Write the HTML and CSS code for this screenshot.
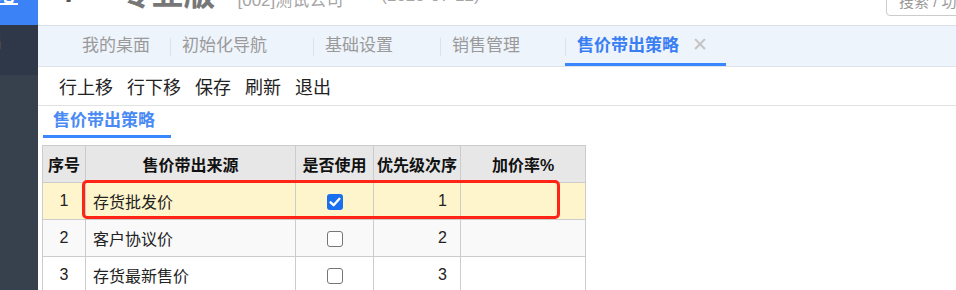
FILE: index.html
```html
<!DOCTYPE html>
<html lang="zh-CN">
<head>
  <meta charset="UTF-8">
  <title>售价带出策略</title>
  <link rel="stylesheet" href="styles.css">
</head>
<body>

  <div class="sidebar">
    <div class="side-top"><span class="side-logo">中心</span></div>
    <div class="side-menu"><span class="side-item">基础</span></div>
  </div>

  <div class="main">
    <div class="header">
      <span class="logo-mark">/</span>
      <span class="logo-text">专业版</span>
      <span class="company">[002]测试公司</span>
      <span class="date">(2023-07-12)</span>
      <span class="search">搜索 / 功能</span>
    </div>

    <div class="tabs">
      <div class="tab">我的桌面</div>
      <div class="tab">初始化导航</div>
      <div class="tab">基础设置</div>
      <div class="tab">销售管理</div>
      <div class="tab active">售价带出策略 <span class="close">✕</span></div>
    </div>

    <div class="toolbar">
      <span>行上移</span>
      <span>行下移</span>
      <span>保存</span>
      <span>刷新</span>
      <span>退出</span>
    </div>

    <div class="content">
      <div class="section-title">售价带出策略</div>

      <div class="grid-wrap">
        <table class="grid">
          <thead>
            <tr>
              <th class="c-no">序号</th>
              <th class="c-src">售价带出来源</th>
              <th class="c-use">是否使用</th>
              <th class="c-pri">优先级次序</th>
              <th class="c-rate">加价率%</th>
            </tr>
          </thead>
          <tbody>
            <tr class="row-sel">
              <td class="c-no">1</td>
              <td class="c-src">存货批发价</td>
              <td class="c-use"><span class="chk on"><svg width="16" height="16" viewBox="0 0 16 16"><path d="M3.6 8.3 L6.6 11.2 L12.4 4.8" fill="none" stroke="#fff" stroke-width="2.4" stroke-linecap="round" stroke-linejoin="round"/></svg></span></td>
              <td class="c-pri">1</td>
              <td class="c-rate"></td>
            </tr>
            <tr class="row-alt">
              <td class="c-no">2</td>
              <td class="c-src">客户协议价</td>
              <td class="c-use"><span class="chk"></span></td>
              <td class="c-pri">2</td>
              <td class="c-rate"></td>
            </tr>
            <tr>
              <td class="c-no">3</td>
              <td class="c-src">存货最新售价</td>
              <td class="c-use"><span class="chk"></span></td>
              <td class="c-pri">3</td>
              <td class="c-rate"></td>
            </tr>
          </tbody>
        </table>
        <div class="mark"></div>
      </div>
    </div>
  </div>

</body>
</html>
```

FILE: styles.css
```css
body {
  margin: 0;
  display: flex;
  height: 290px;
  overflow: hidden;
  font-family: "Liberation Sans", "Noto Sans CJK SC", sans-serif;
  color: #333;
  background: white;
}

/* 左侧菜单 */
.sidebar {
  width: 38px;
  flex-shrink: 0;
  background: #37414d;
  overflow: hidden;
}

.side-top {
  height: 25px;
  background: #3b82f6;
  overflow: hidden;
}

.side-logo {
  display: block;
  margin: -21px 0 0 -22px;
  color: white;
  font-size: 20px;
  font-weight: bold;
  text-decoration: underline;
}

.side-menu {
  height: 50px;
  background: #2e3848;
  overflow: hidden;
}

.side-item {
  display: block;
  margin: 2px 0 0 -33px;
  color: #8a8f97;
  font-size: 17px;
  font-weight: bold;
}

.main {
  flex: 1;
  min-width: 0;
}

/* 顶部 */
.header {
  height: 25px;
  border-bottom: 1px solid #dcdfe6;
  display: flex;
  align-items: flex-start;
  overflow: hidden;
}

.logo-mark {
  margin: -30px 0 0 28px;
  font-size: 34px;
  font-weight: bold;
  color: #555;
}

.logo-text {
  margin: -32px 0 0 44px;
  font-size: 32px;
  font-weight: bold;
  color: #777;
}

.company {
  margin: -14px 0 0 22px;
  font-size: 17px;
  color: #a5a5a5;
}

.date {
  margin: -14px 0 0 38px;
  font-size: 17px;
  color: #a5a5a5;
}

.search {
  margin: -12px -14px 0 auto;
  width: 70px;
  height: 26px;
  padding-left: 12px;
  border: 1px solid #ccc;
  border-radius: 4px;
  font-size: 15px;
  line-height: 26px;
  color: #999;
  white-space: nowrap;
  overflow: hidden;
}

/* 标签页 */
.tabs {
  height: 40px;
  background: #eef4fc;
  border-bottom: 1px solid #dfe3ea;
  display: flex;
  padding-left: 32px;
}

.tab {
  position: relative;
  box-sizing: border-box;
  padding-left: 12px;
  font-size: 17px;
  line-height: 40px;
  color: #9a9a9a;
  white-space: nowrap;
}

.tab:nth-child(1) { width: 100px; }
.tab:nth-child(2) { width: 143px; }
.tab:nth-child(3) { width: 127px; }
.tab:nth-child(4) { width: 125px; }
.tab:nth-child(5) { width: 161px; }

.tab + .tab::before {
  content: "";
  position: absolute;
  left: 0;
  top: 12px;
  height: 18px;
  border-left: 1px solid #dde2ea;
}

.tab.active {
  color: #3a7ef3;
  font-weight: bold;
  border-bottom: 3px solid #3a86ff;
  line-height: 38px;
}

.close {
  margin-left: 8px;
  font-weight: normal;
  font-size: 19px;
  color: #c4c4c4;
}

/* 工具栏 */
.toolbar {
  height: 38px;
  border-bottom: 1px solid #e2e2e2;
  display: flex;
  align-items: center;
  gap: 14px;
  padding-left: 21px;
  font-size: 18px;
  color: #222;
}

/* 内容 */
.content {
  padding-left: 4px;
}

.section-title {
  width: 128px;
  margin-left: 1px;
  box-sizing: border-box;
  padding-left: 10px;
  height: 32px;
  line-height: 29px;
  border-bottom: 3px solid #3a86ff;
  font-size: 17px;
  font-weight: bold;
  color: #4a8af4;
}

.grid-wrap {
  position: relative;
  margin-top: 7px;
}

.grid {
  border-collapse: collapse;
  table-layout: fixed;
  font-size: 16px;
}

.grid th,
.grid td {
  border: 1px solid #cccccc;
  height: 36px;
  padding: 0;
}

.grid th {
  background: #e7e7e7;
  font-weight: bold;
  color: #111;
}

.grid td {
  color: #222;
}

.c-no { width: 42px; text-align: center; }
.c-src { width: 209px; }
.c-use { width: 77px; text-align: center; }
.c-pri { width: 86px; }
.c-rate { width: 124px; }

td.c-src { width: 202px; padding-left: 7px; }
td.c-pri { width: 73px; text-align: right; padding-right: 13px; }

.row-sel td { background: #fff5cc; }
.row-alt td { background: #f9f9f9; }

.chk {
  display: inline-block;
  box-sizing: border-box;
  width: 16px;
  height: 16px;
  border: 1.5px solid #767676;
  border-radius: 3px;
  vertical-align: middle;
  background: white;
}

.chk.on {
  border: none;
  background: #1a6fef;
}

.chk svg {
  display: block;
}

/* 选中行的红框标注 */
.mark {
  position: absolute;
  left: 40px;
  top: 35px;
  width: 478px;
  height: 39px;
  box-sizing: border-box;
  border: 3px solid #ff2415;
  border-radius: 5px;
}
```
